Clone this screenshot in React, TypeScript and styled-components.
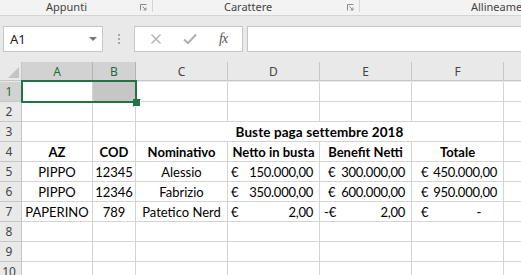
import React from 'react';
import styled, { createGlobalStyle } from 'styled-components';

const GlobalStyle = createGlobalStyle`
    body {
        margin: 0;
        overflow: hidden;
        background: #fff;
    }
`;

const COLS = [
    { key: 'A', width: 71 },
    { key: 'B', width: 43 },
    { key: 'C', width: 92 },
    { key: 'D', width: 92 },
    { key: 'E', width: 92 },
    { key: 'F', width: 92 },
    { key: 'G', width: 92 },
];

const SELECTED_COLS = ['A', 'B'];

const Page = styled.div`
    width: 521px;
    height: 275px;
    overflow: hidden;
    position: relative;
    background: #fff;
    font-family: Lato, 'Liberation Sans', sans-serif;
`;

const RibbonLabels = styled.div`
    height: 15px;
    display: flex;
    background: #f3f3f3;
    border-bottom: 1px solid #d5d5d5;
    font-family: 'Noto Sans', 'Open Sans', sans-serif;
    font-size: 11px;
    color: #444;
`;

const Group = styled.div<{ $width?: number }>`
    width: ${p => (p.$width ? `${p.$width}px` : 'auto')};
    flex: ${p => (p.$width ? 'none' : '1')};
    display: flex;
    align-items: flex-start;
    height: 15px;
    box-sizing: border-box;
    position: relative;
    &::after {
        content: '';
        display: ${p => (p.$width ? 'block' : 'none')};
        position: absolute;
        right: 0;
        top: 0;
        height: 12px;
        width: 1px;
        background: #d5d5d5;
    }
`;

const GroupLabel = styled.span<{ $indent: number }>`
    flex: 1;
    padding-left: ${p => p.$indent}px;
    line-height: 13px;
    white-space: nowrap;
`;

const Launcher = styled.svg`
    width: 7px;
    height: 7px;
    margin-right: 6px;
    margin-top: 4px;
`;

const FormulaArea = styled.div`
    height: 46px;
    background: #e9e9e9;
    box-sizing: border-box;
    padding: 10px 0 0 3px;
    display: flex;
    align-items: flex-start;
`;

const NameBox = styled.div`
    width: 100px;
    height: 26px;
    box-sizing: border-box;
    background: #fff;
    border: 1px solid #c6c6c6;
    display: flex;
    align-items: center;
    justify-content: space-between;
    padding: 0 5px 0 6px;
    font-family: 'Noto Sans', 'Open Sans', sans-serif;
    font-size: 13px;
    color: #222;
`;

const Caret = styled.span`
    width: 0;
    height: 0;
    border-left: 4px solid transparent;
    border-right: 4px solid transparent;
    border-top: 4px solid #777;
`;

const Grip = styled.div`
    width: 31px;
    height: 26px;
    display: flex;
    flex-direction: column;
    align-items: center;
    justify-content: center;
    gap: 2px;
    span {
        width: 2px;
        height: 2px;
        background: #a6a6a6;
    }
`;

const ButtonBox = styled.div`
    width: 109px;
    height: 26px;
    box-sizing: border-box;
    background: #fff;
    border: 1px solid #c6c6c6;
    display: flex;
    align-items: center;
    justify-content: space-around;
    padding: 0 4px;
`;

const Fx = styled.span`
    font-family: 'Liberation Serif', serif;
    font-style: italic;
    font-size: 14px;
    color: #555;
    letter-spacing: -1px;
`;

const FormulaInput = styled.div`
    flex: 1;
    height: 26px;
    margin-left: 4px;
    box-sizing: border-box;
    background: #fff;
    border: 1px solid #c6c6c6;
    border-right: none;
`;

const Grid = styled.div`
    position: relative;
    display: grid;
    grid-template-columns: 22px ${COLS.map(c => `${c.width}px`).join(' ')};
    grid-auto-rows: 20px;
    background: #e9e9e9;
`;

const Corner = styled.div`
    height: 19px;
    box-sizing: border-box;
    background: #e9e9e9;
    border-right: 1px solid #c6c6c6;
    border-bottom: 1px solid #c6c6c6;
    position: relative;
    svg {
        position: absolute;
        right: 2px;
        bottom: 2px;
    }
`;

const ColHead = styled.div<{ $sel?: boolean }>`
    height: 19px;
    box-sizing: border-box;
    display: flex;
    align-items: center;
    justify-content: center;
    background: ${p => (p.$sel ? '#d2d2d2' : '#e9e9e9')};
    color: ${p => (p.$sel ? '#1e6b40' : '#444')};
    border-right: 1px solid ${p => (p.$sel ? '#b4b4b4' : '#c6c6c6')};
    border-bottom: 1px solid #c6c6c6;
    font-family: 'Noto Sans', 'Open Sans', sans-serif;
    font-size: 12px;
`;

const RowHead = styled.div<{ $sel?: boolean }>`
    box-sizing: border-box;
    display: flex;
    align-items: center;
    justify-content: center;
    padding-right: 3px;
    background: ${p => (p.$sel ? '#d2d2d2' : '#e9e9e9')};
    color: ${p => (p.$sel ? '#1e6b40' : '#444')};
    border-right: 1px solid #c6c6c6;
    border-bottom: 1px solid #c6c6c6;
    font-family: 'Noto Sans', 'Open Sans', sans-serif;
    font-size: 12px;
`;

const Cell = styled.div<{ $bold?: boolean; $span?: number; $fill?: string }>`
    grid-column: span ${p => p.$span ?? 1};
    box-sizing: border-box;
    display: flex;
    align-items: center;
    justify-content: center;
    white-space: nowrap;
    overflow: visible;
    background: ${p => p.$fill ?? '#fff'};
    border-right: 1px solid #d4d4d4;
    border-bottom: 1px solid #d4d4d4;
    font-size: 13px;
    font-weight: ${p => (p.$bold ? 700 : 400)};
    color: #000;
    padding-top: 1px;
`;

const TitleCell = styled(Cell)`
    font-size: 13.5px;
    letter-spacing: 0.1px;
`;

const MoneyCell = styled(Cell)<{ $lead: number }>`
    justify-content: space-between;
    gap: 3px;
    padding-left: ${p => p.$lead}px;
    padding-right: 6px;
`;

const Amount = styled.span<{ $tail?: number }>`
    margin-right: ${p => p.$tail ?? 0}px;
    letter-spacing: -0.25px;
`;

const Selection = styled.div`
    position: absolute;
    left: 21px;
    top: 18px;
    width: 116px;
    height: 23px;
    box-sizing: border-box;
    border: 2px solid #217346;
    pointer-events: none;
`;

const FillHandle = styled.div`
    position: absolute;
    left: 133px;
    top: 37px;
    width: 6px;
    height: 6px;
    background: #217346;
    border: 1px solid #fff;
    border-top-color: transparent;
    border-left-color: transparent;
`;

type Money = { sign: string; amount: string; tail?: number };
type Value = string | Money | null;

const LEADS = [3, 8, 9];

const rows: { n: number; cells?: Value[]; bold?: boolean; title?: string }[] = [
    { n: 1 },
    { n: 2 },
    { n: 3, title: 'Buste paga settembre 2018' },
    {
        n: 4,
        bold: true,
        cells: ['AZ', 'COD', 'Nominativo', 'Netto in busta', 'Benefit Netti', 'Totale', null],
    },
    {
        n: 5,
        cells: [
            'PIPPO', '12345', 'Alessio',
            { sign: '€', amount: '150.000,00' },
            { sign: '€', amount: '300.000,00' },
            { sign: '€', amount: '450.000,00' },
            null,
        ],
    },
    {
        n: 6,
        cells: [
            'PIPPO', '12346', 'Fabrizio',
            { sign: '€', amount: '350.000,00' },
            { sign: '€', amount: '600.000,00' },
            { sign: '€', amount: '950.000,00' },
            null,
        ],
    },
    {
        n: 7,
        cells: [
            'PAPERINO', '789', 'Patetico Nerd',
            { sign: '€', amount: '2,00' },
            { sign: '-€', amount: '2,00' },
            { sign: '€', amount: '-', tail: 16 },
            null,
        ],
    },
    { n: 8 },
    { n: 9 },
    { n: 10 },
];

function LauncherIcon() {
    return (
        <Launcher viewBox="0 0 7 7">
            <path d="M0.5 6.5V0.5H6.5" fill="none" stroke="#8a8a8a" strokeWidth="1" />
            <path d="M2.5 2.5L6 6M6 3.5V6H3.5" fill="none" stroke="#8a8a8a" strokeWidth="1" />
        </Launcher>
    );
}

function renderRow(row: typeof rows[number]) {
    const head = <RowHead key={`h${row.n}`} $sel={row.n === 1}>{row.n}</RowHead>;

    if (row.title) {
        return [
            head,
            <Cell key="a" />,
            <Cell key="b" />,
            <TitleCell key="t" $span={4} $bold>{row.title}</TitleCell>,
            <Cell key="g" />,
        ];
    }

    const cells: Value[] = row.cells ?? COLS.map(() => null);
    return [
        head,
        ...cells.map((v, i) => {
            const fill = row.n === 1 && i === 1 ? '#c6c6c6' : undefined;
            if (v && typeof v === 'object') {
                const lead = v.sign.startsWith('-') ? LEADS[i - 3] - 4 : LEADS[i - 3];
                return (
                    <MoneyCell key={i} $lead={lead}>
                        <span>{v.sign}</span>
                        <Amount $tail={v.tail}>{v.amount}</Amount>
                    </MoneyCell>
                );
            }
            return <Cell key={i} $bold={row.bold} $fill={fill}>{v}</Cell>;
        }),
    ];
}

function App() {
    return (
        <Page>
            <GlobalStyle />
            <RibbonLabels>
                <Group $width={153}>
                    <GroupLabel $indent={46}>Appunti</GroupLabel>
                    <LauncherIcon />
                </Group>
                <Group $width={207}>
                    <GroupLabel $indent={71}>Carattere</GroupLabel>
                    <LauncherIcon />
                </Group>
                <Group>
                    <GroupLabel $indent={111}>Allineamento</GroupLabel>
                </Group>
            </RibbonLabels>

            <FormulaArea>
                <NameBox>
                    A1
                    <Caret />
                </NameBox>
                <Grip><span /><span /><span /></Grip>
                <ButtonBox>
                    <svg width="12" height="12" viewBox="0 0 12 12">
                        <path d="M1.5 1.5L10.5 10.5M10.5 1.5L1.5 10.5" stroke="#b0b0b0" strokeWidth="1.3" />
                    </svg>
                    <svg width="14" height="12" viewBox="0 0 14 12">
                        <path d="M1 6.5L5 10L13 1.5" fill="none" stroke="#b0b0b0" strokeWidth="2" />
                    </svg>
                    <Fx>fx</Fx>
                </ButtonBox>
                <FormulaInput />
            </FormulaArea>

            <Grid>
                <Corner>
                    <svg width="11" height="11" viewBox="0 0 11 11">
                        <path d="M11 0V11H0Z" fill="#c4c4c4" />
                    </svg>
                </Corner>
                {COLS.map(c => (
                    <ColHead key={c.key} $sel={SELECTED_COLS.includes(c.key)}>{c.key}</ColHead>
                ))}
                {rows.map(renderRow)}
                <Selection />
                <FillHandle />
            </Grid>
        </Page>
    );
}

export default App;
